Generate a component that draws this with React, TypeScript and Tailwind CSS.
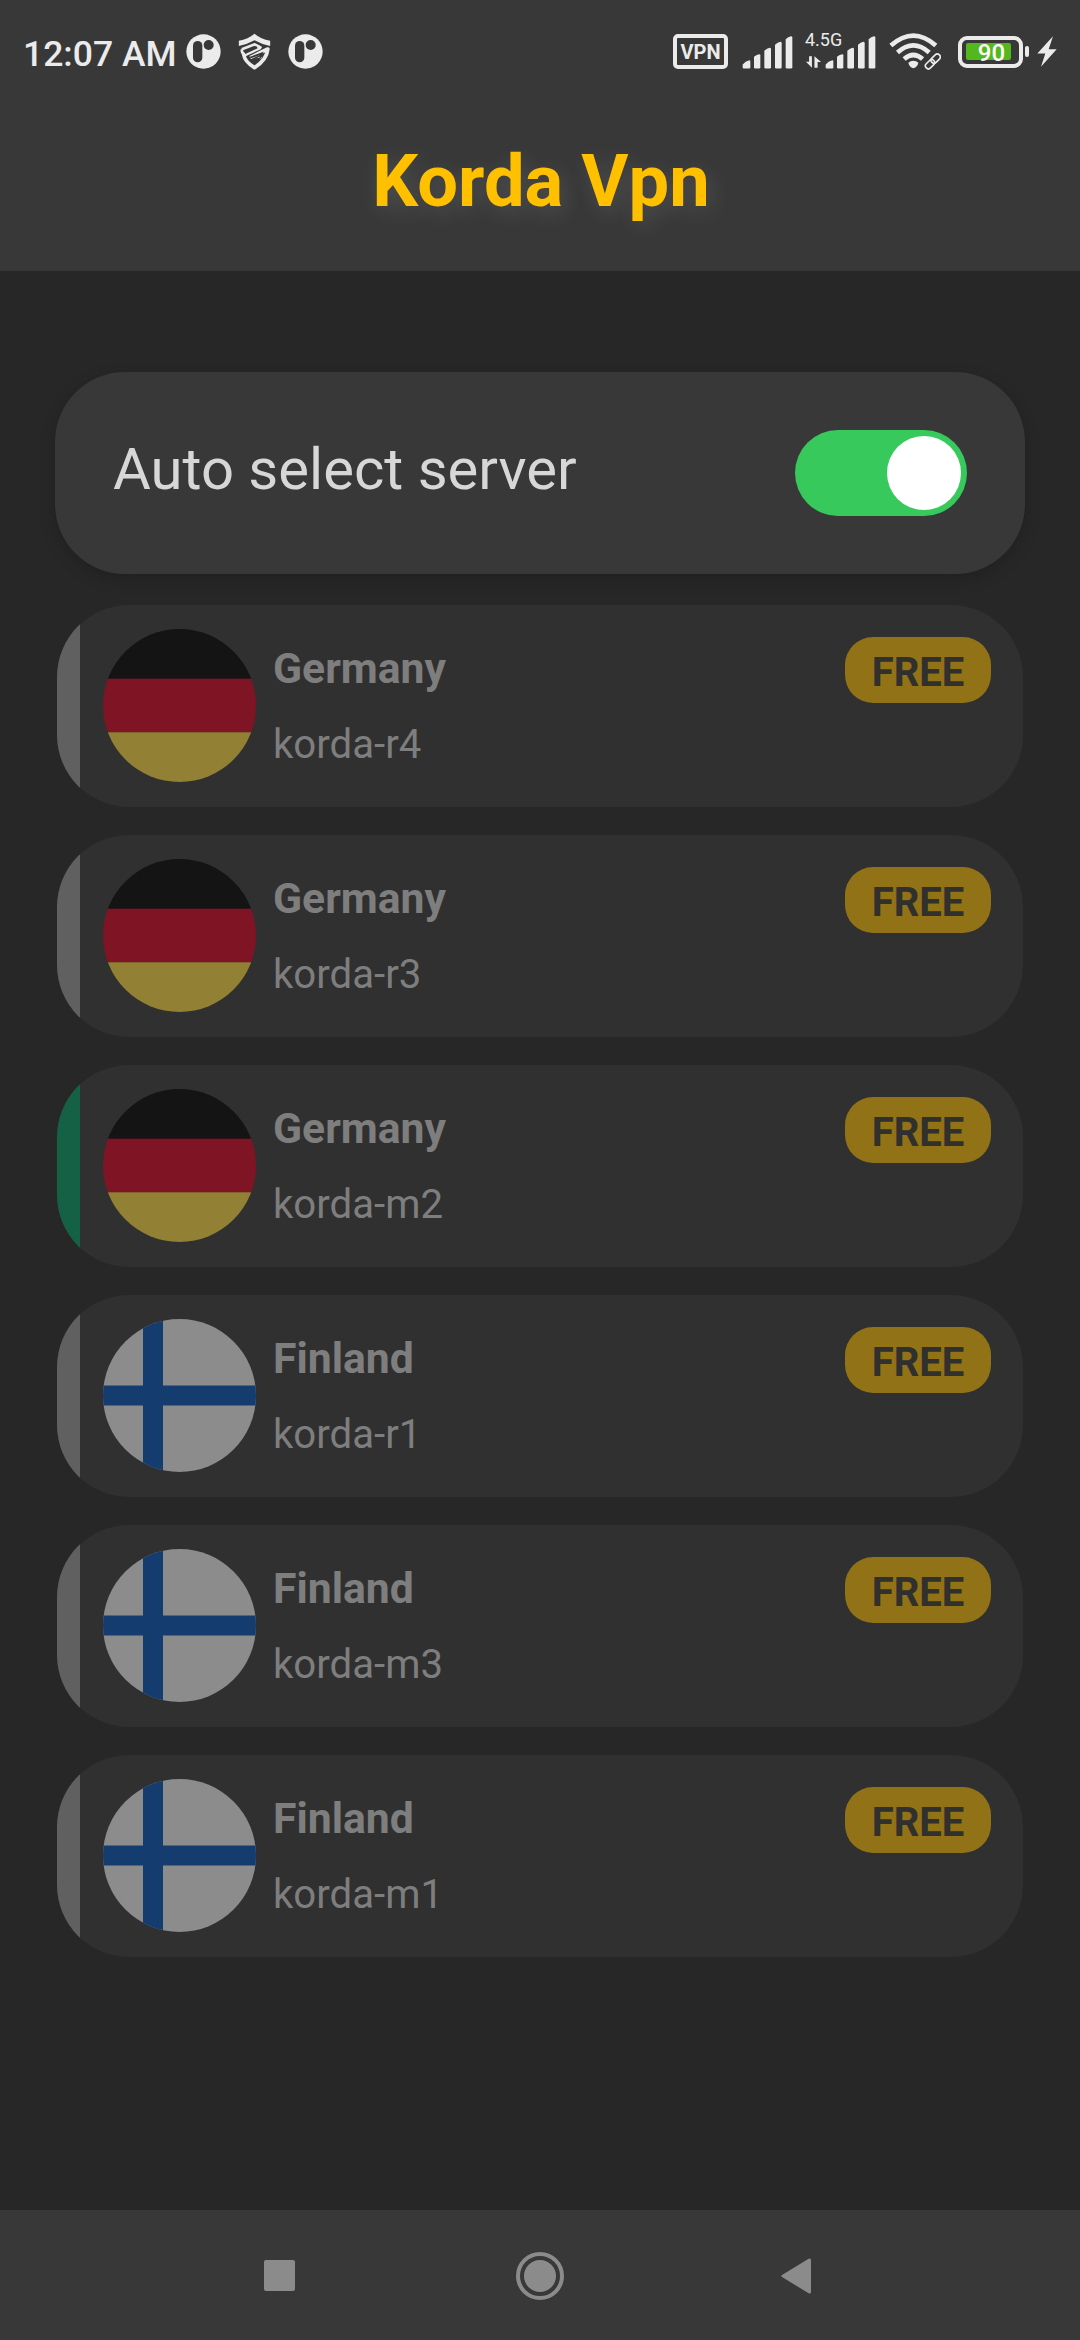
import clsx from "clsx";

type Country = "Germany" | "Finland";

type Server = {
  country: Country;
  name: string;
  active?: boolean;
};

const servers: Server[] = [
  { country: "Germany", name: "korda-r4" },
  { country: "Germany", name: "korda-r3" },
  { country: "Germany", name: "korda-m2", active: true },
  { country: "Finland", name: "korda-r1" },
  { country: "Finland", name: "korda-m3" },
  { country: "Finland", name: "korda-m1" },
];

function AppBadge() {
  return (
    <svg viewBox="0 0 105 105" className="size-[35px] shrink-0">
      <circle cx="52.5" cy="52.5" r="51.5" fill="#ebebeb" />
      <rect x="21" y="21" width="28" height="64" rx="14" fill="#383838" />
      <circle cx="68" cy="33" r="15" fill="#383838" />
    </svg>
  );
}

function ShieldIcon() {
  return (
    <svg viewBox="0 0 98 114" className="h-[38px] w-[33px] shrink-0">
      <path d="M2 39V23Q30 18 49 2Q68 18 96 23V39Q70 34 49 22Q28 34 2 39Z" fill="#ebebeb" />
      <g fill="none" stroke="#ebebeb" strokeLinejoin="round">
        <path d="M11 49Q10 62 20 64L67 43L50 34L11 49" strokeWidth="8" />
        <path d="M67 43L17 66Q20 86 49 104Q86 80 89 48L64 60L36 74" strokeWidth="11" />
        <path d="M46 84L70 72" strokeWidth="7" />
      </g>
      <path d="M20 60L57 43" stroke="#383838" strokeWidth="6" />
      <path d="M34 72L76 56Q74 76 49 91L34 79L64 74V67L38 76Z" fill="#383838" />
    </svg>
  );
}

function SignalBars() {
  return (
    <svg viewBox="0 0 153 98" className="h-[33px] w-[51px] shrink-0" fill="#ebebeb">
      <path d="M2 94V85Q10 74 22 72Q25 72 25 75V94Q25 97 22 97H5Q2 97 2 94Z" />
      <path d="M36 93V62Q44 55 52 54Q55 54 55 57V93Q55 97 51 97H40Q36 97 36 93Z" />
      <path d="M67 93V44Q75 36 83 35Q87 35 87 39V93Q87 97 83 97H71Q67 97 67 93Z" />
      <path d="M99 93V26Q107 18 115 17Q119 17 119 21V93Q119 97 115 97H103Q99 97 99 93Z" />
      <path d="M131 93V9Q138 1 147 0Q151 0 151 4V93Q151 97 147 97H135Q131 97 131 93Z" />
    </svg>
  );
}

function WifiIcon() {
  return (
    <svg viewBox="0 0 156 112" className="h-[37px] w-[52px] shrink-0">
      <g fill="none" stroke="#ebebeb" strokeWidth="14">
        <path d="M5 38Q73 -22 141 38" />
        <path d="M25 59Q73 16 121 59" />
        <path d="M45 79Q73 54 101 79" />
      </g>
      <path d="M73 84Q82 84 88 90Q86 103 73 107Q60 103 58 90Q64 84 73 84Z" fill="#ebebeb" />
      <g transform="rotate(-45 132 86)" fill="none">
        <rect x="101" y="72" width="62" height="28" rx="14" fill="#383838" />
        <rect x="104" y="77" width="32" height="18" rx="9" stroke="#ebebeb" strokeWidth="5" />
        <rect x="128" y="77" width="32" height="18" rx="9" stroke="#ebebeb" strokeWidth="5" />
      </g>
    </svg>
  );
}

function Battery() {
  return (
    <div className="flex items-center gap-[2px]">
      <div className="flex h-8 w-[65px] items-center rounded-[9px] border-4 border-[#ebebeb] pl-1">
        <div className="flex h-[17px] w-[45px] items-center justify-center rounded-[2px] bg-[#52b81c] pt-[3px] pl-1.5 text-[24px] leading-none font-medium text-white">
          90
        </div>
      </div>
      <div className="h-[11px] w-1 rounded-full bg-[#ebebeb]" />
    </div>
  );
}

function StatusBar() {
  return (
    <div className="flex h-[103px] items-start justify-between px-[23px] text-[#ebebeb]">
      <div className="flex h-[103px] items-center">
        <span className="mt-[4px] w-[163px] text-[35.5px] leading-[42px] font-medium whitespace-nowrap">12:07 AM</span>
        <AppBadge />
        <span className="w-[17px]" />
        <ShieldIcon />
        <span className="w-[17px]" />
        <AppBadge />
      </div>
      <div className="flex h-[103px] items-center">
        <div className="flex h-[35px] w-[55px] items-center justify-center rounded-[5px] border-4 border-[#ebebeb] text-[20px] leading-none font-bold">
          VPN
        </div>
        <div className="ml-[14px] flex h-[35px] items-end">
          <SignalBars />
        </div>
        <div className="relative ml-[12px] flex h-[35px] w-[71px] items-end justify-end">
          <span className="absolute -top-[1px] left-0 text-[18px] leading-[14px]">4.5G</span>
          <svg viewBox="0 0 50 38" className="mr-[3px] mb-[1px] h-[12px] w-[17px]" fill="#ebebeb">
            <path d="M11 1H20V37L1 18H11Z" />
            <path d="M28 37V1L49 19H38V37Z" />
          </svg>
          <SignalBars />
        </div>
        <div className="ml-[13px]">
          <WifiIcon />
        </div>
        <div className="ml-[17px]">
          <Battery />
        </div>
        <svg viewBox="0 0 60 92" className="ml-[8px] h-[31px] w-5" fill="#ebebeb">
          <path d="M48 0L1 52H25L12 92L59 39H35Z" />
        </svg>
      </div>
    </div>
  );
}

function Flag({ country }: { country: Country }) {
  return (
    <div className="size-[153px] shrink-0 overflow-hidden rounded-full">
      {country === "Germany" ? (
        <svg viewBox="0 0 153 153" className="size-full">
          <rect width="153" height="50" fill="#141414" />
          <rect y="49.7" width="153" height="54" fill="#7f1424" />
          <rect y="103.3" width="153" height="50" fill="#928035" />
        </svg>
      ) : (
        <svg viewBox="0 0 153 153" className="size-full">
          <rect width="153" height="153" fill="#8c8c8c" />
          <path d="M40 0H60V153H40ZM0 66.5H153V86.5H0Z" fill="#143c6e" />
        </svg>
      )}
    </div>
  );
}

function ServerRow({ server }: { server: Server }) {
  return (
    <li className="flex h-[202px] overflow-hidden rounded-[72px] bg-[#303030]">
      <div className={clsx("w-[23px] shrink-0", server.active ? "bg-[#156146]" : "bg-[#606060]")} />
      <div className="flex flex-1 items-start pr-8 pl-[23px]">
        <div className="pt-6">
          <Flag country={server.country} />
        </div>
        <div className="flex flex-1 flex-col gap-[29px] pt-[38px] pl-[17px] text-[#7e7e7e]">
          <p className="text-[42.7px] leading-[50px] font-bold">{server.country}</p>
          <p className="text-[40.2px] leading-[46px]">{server.name}</p>
        </div>
        <span className="mt-8 flex h-[66px] w-[146px] items-center justify-center rounded-[28px] bg-[#917216] pt-[5px] text-[40px] leading-none font-bold text-[#30302e]">
          FREE
        </span>
      </div>
    </li>
  );
}

function NavigationBar() {
  return (
    <nav className="flex h-[130px] items-center justify-between bg-[#383838] pt-px pr-[269px] pl-[264px] text-[#8b8b8b]">
      <div className="size-[31px] rounded-[2px] bg-current" />
      <div className="ml-1 flex size-12 items-center justify-center rounded-full border-4 border-current">
        <div className="size-8 rounded-full bg-current" />
      </div>
      <svg viewBox="0 0 30 36" className="h-9 w-[30px]" fill="currentColor">
        <path d="M1 17Q-.5 18 1 19L28 35.5Q30 36 30 34V2Q30 0 28 .5Z" />
      </svg>
    </nav>
  );
}

export default function App() {
  return (
    <div className="flex h-[2340px] w-[1080px] flex-col bg-[#272727] font-[Roboto,sans-serif]">
      <header className="h-[271px] bg-[#383838]">
        <StatusBar />
        <h1 className="pt-[37px] pl-[2px] text-center text-[72.3px] leading-[84px] font-bold text-[#ffc000] [text-shadow:4px_6px_22px_rgba(255,255,255,0.13)]">
          Korda Vpn
        </h1>
      </header>

      <main className="flex-1 pt-[101px]">
        <section className="mx-[55px] flex h-[202px] items-center justify-between rounded-[70px] bg-[#383838] px-[58px] shadow-[0_5px_16px_rgba(0,0,0,0.18)]">
          <span className="-mt-2 text-[58px] leading-[68px] text-[#d7d7d7]">Auto select server</span>
          <button
            type="button"
            role="switch"
            aria-checked="true"
            aria-label="Auto select server"
            className="flex h-[86px] w-[172px] items-center justify-end rounded-full bg-[#37c95c] p-1.5"
          >
            <span className="size-[74px] rounded-full bg-white" />
          </button>
        </section>

        <ul className="mx-[57px] mt-[31px] flex flex-col gap-7">
          {servers.map((server) => (
            <ServerRow key={server.name} server={server} />
          ))}
        </ul>
      </main>

      <NavigationBar />
    </div>
  );
}
